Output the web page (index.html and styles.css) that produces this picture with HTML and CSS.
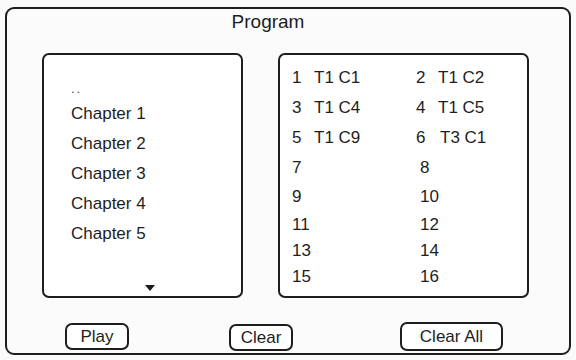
FILE: index.html
```html
<!DOCTYPE html>
<html>
<head>
<meta charset="utf-8">
<link rel="stylesheet" href="styles.css">
</head>
<body>
<div class="frame">
  <div class="title">Program</div>
  <div class="panels">
    <div class="box list">
      <div class="item up">..</div>
      <div class="item">Chapter 1</div>
      <div class="item">Chapter 2</div>
      <div class="item">Chapter 3</div>
      <div class="item">Chapter 4</div>
      <div class="item">Chapter 5</div>
      <div class="more">
        <svg width="10" height="6" viewBox="0 0 10 6"><path d="M0 0H10L5 6Z" fill="#1a1a1a"/></svg>
      </div>
    </div>
    <div class="box prog">
      <div class="cell"><span class="num">1</span><span>T1 C1</span></div>
      <div class="cell"><span class="num">2</span><span>T1 C2</span></div>
      <div class="cell"><span class="num">3</span><span>T1 C4</span></div>
      <div class="cell"><span class="num">4</span><span>T1 C5</span></div>
      <div class="cell"><span class="num">5</span><span>T1 C9</span></div>
      <div class="cell"><span class="num">6</span><span class="shift">T3 C1</span></div>
      <div class="cell"><span class="num">7</span></div>
      <div class="cell r"><span class="num">8</span></div>
      <div class="cell"><span class="num">9</span></div>
      <div class="cell r"><span class="num">10</span></div>
      <div class="cell"><span class="num">11</span></div>
      <div class="cell r"><span class="num">12</span></div>
      <div class="cell"><span class="num">13</span></div>
      <div class="cell r"><span class="num">14</span></div>
      <div class="cell"><span class="num">15</span></div>
      <div class="cell r"><span class="num">16</span></div>
    </div>
  </div>
  <div class="buttons">
    <div class="btn play">Play</div>
    <div class="btn clear">Clear</div>
    <div class="btn clearall">Clear All</div>
  </div>
</div>
</body>
</html>
```
FILE: styles.css
```css
html, body {
  margin: 0;
  padding: 0;
  background: #fafafa;
}
body {
  width: 576px;
  height: 360px;
  overflow: hidden;
  font-family: "Liberation Sans", Arial, sans-serif;
  color: #1e1e1e;
}
.frame {
  box-sizing: border-box;
  margin: 7px 0 0 5px;
  width: 566px;
  height: 348px;
  border: 2px solid #1e1e1e;
  border-radius: 9px;
  background: #fbfbfb;
  display: flex;
  flex-direction: column;
}
.title {
  font-size: 19px;
  line-height: 24px;
  text-align: center;
  padding-right: 40px;
  padding-top: 1px;
}
.panels {
  display: flex;
  margin-top: 19px;
  padding-left: 35px;
  gap: 35px;
}
.box {
  box-sizing: border-box;
  height: 245px;
  border: 2px solid #1e1e1e;
  border-radius: 7px;
  background: #fff;
}
.list {
  width: 201px;
  display: flex;
  flex-direction: column;
  padding: 17px 0 5px 27px;
  font-size: 17px;
}
.item {
  line-height: 30px;
}
.item.up {
  font-size: 13px;
  letter-spacing: 2px;
  line-height: 20px;
  padding-top: 7px;
  color: #444;
}
.more {
  margin-top: auto;
  padding-left: 74px;
  line-height: 0;
}
.prog {
  width: 251px;
  padding: 8px 0 0 12px;
  display: grid;
  grid-template-columns: 124px 1fr;
  grid-template-rows: 29px 31px 30px 30px 28px 27px 26px 26px;
  align-items: center;
  font-size: 17px;
}
.cell {
  display: flex;
  white-space: nowrap;
}
.num {
  width: 22px;
}
.cell.r {
  padding-left: 4px;
}
.shift {
  padding-left: 2px;
}
.buttons {
  display: flex;
  align-items: center;
  margin-top: 23px;
  padding-left: 58px;
}
.btn {
  box-sizing: border-box;
  height: 27px;
  border: 2px solid #1e1e1e;
  border-radius: 7px;
  background: #fff;
  font-size: 17px;
  line-height: 23px;
  text-align: center;
}
.play {
  width: 64px;
}
.clear {
  width: 64px;
  margin-left: 100px;
  margin-top: 3px;
}
.clearall {
  width: 103px;
  height: 29px;
  line-height: 25px;
  margin-left: 107px;
}
```
